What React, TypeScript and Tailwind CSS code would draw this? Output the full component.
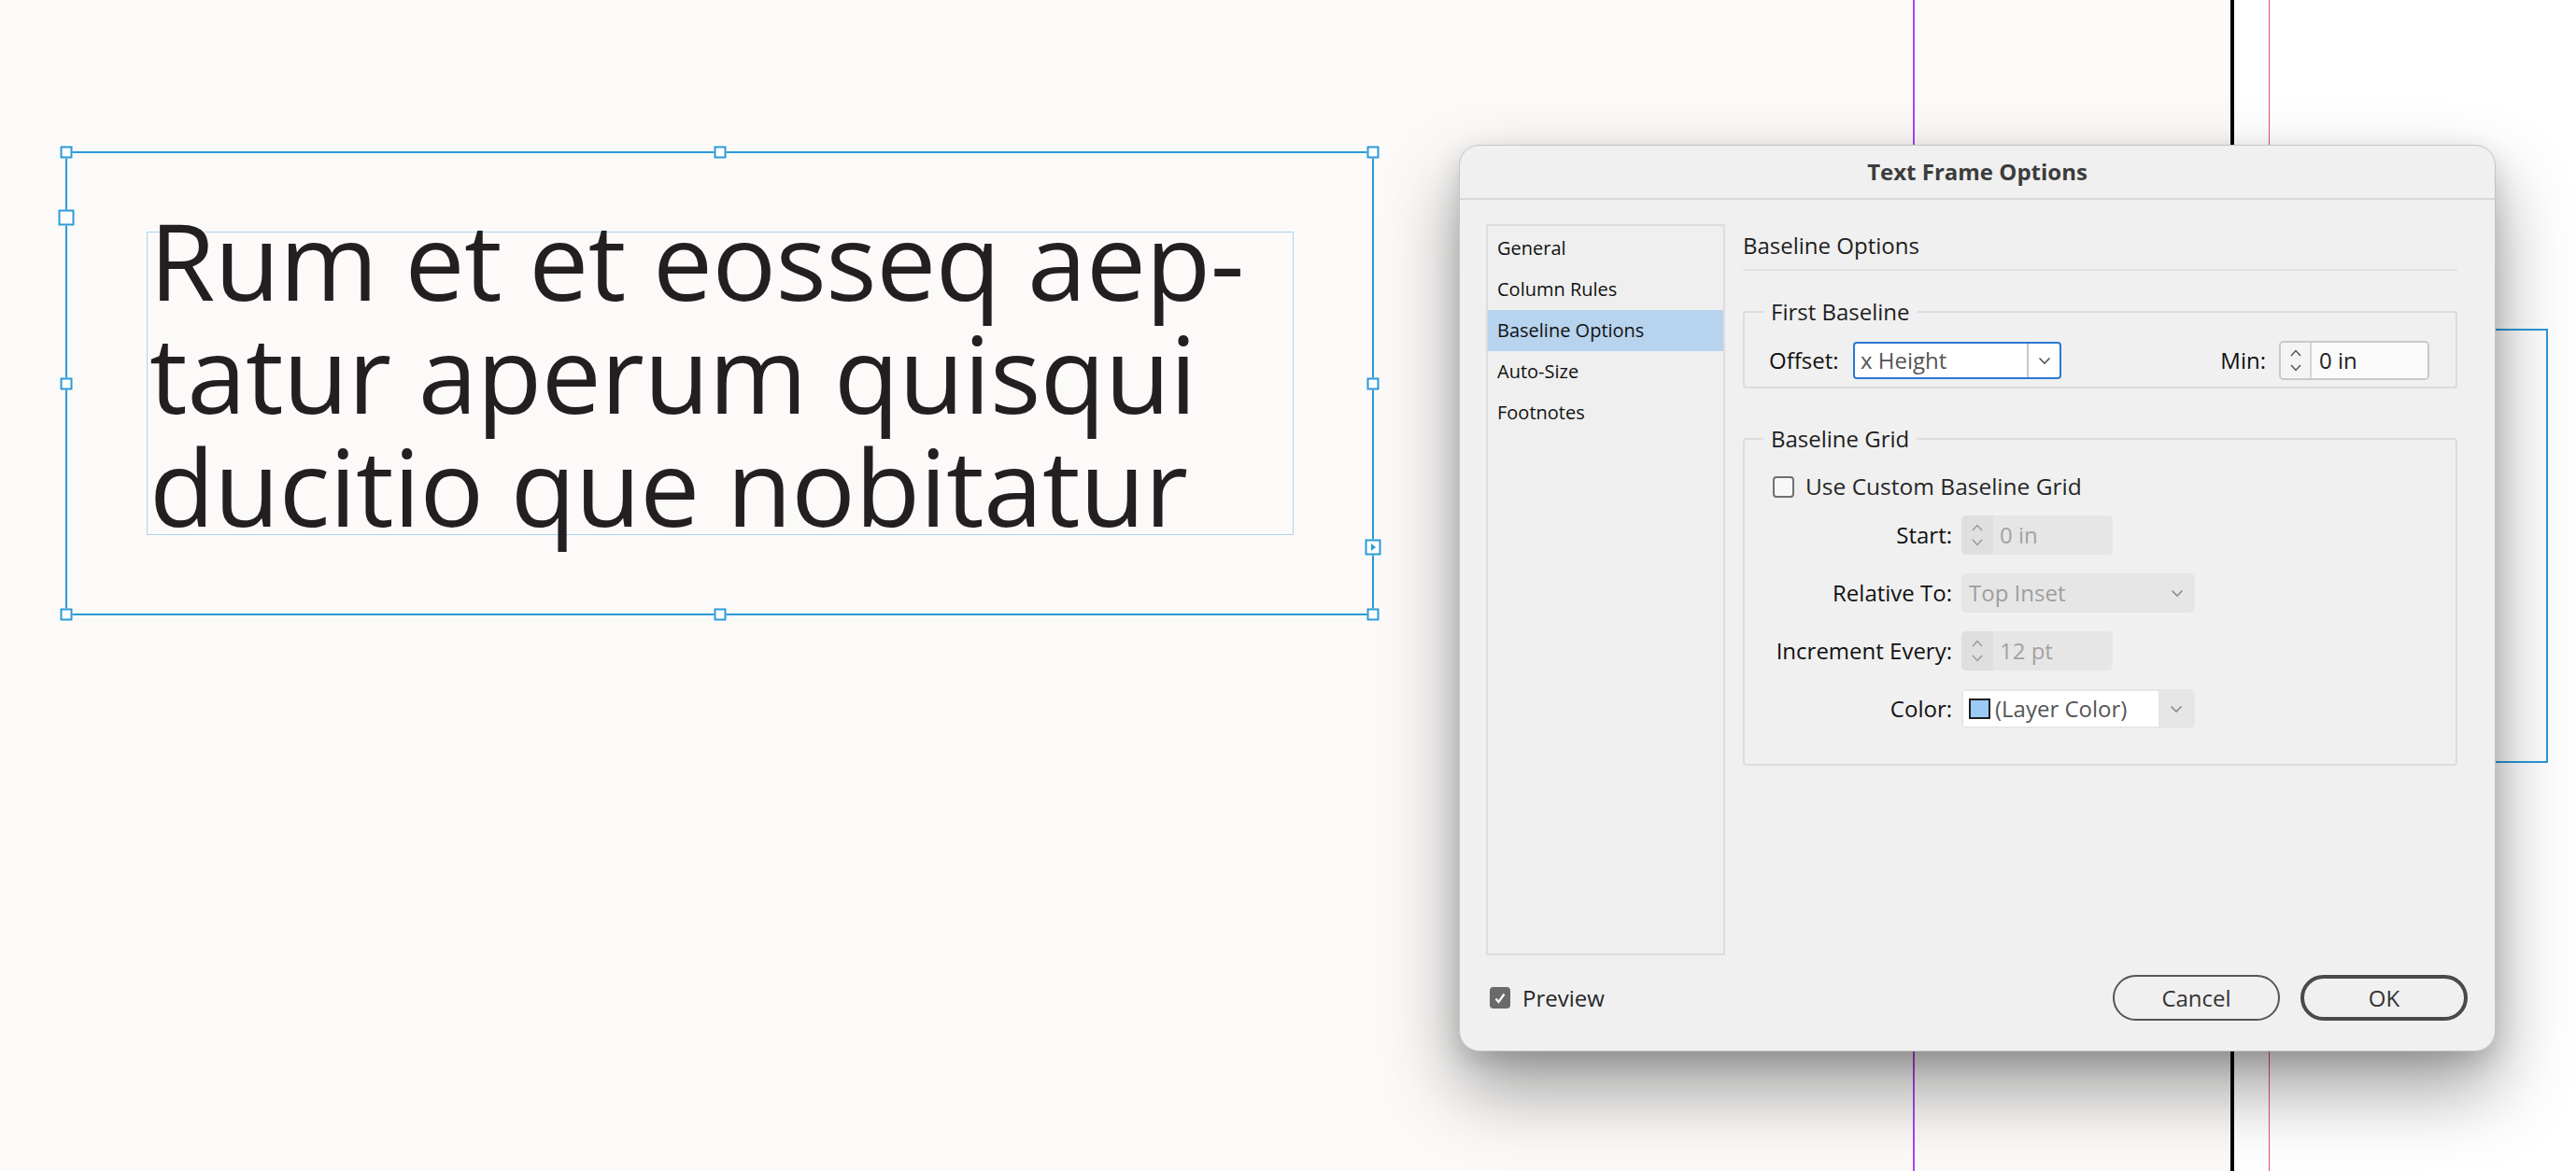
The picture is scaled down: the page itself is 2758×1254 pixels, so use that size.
import React from "react";

const listItems = ["General", "Column Rules", "Baseline Options", "Auto-Size", "Footnotes"];

function Chevron({ muted = false }: { muted?: boolean }) {
  return (
    <svg width="14" height="9" viewBox="0 0 14 9" fill="none">
      <path d="M1.5 1.5 L7 7 L12.5 1.5" stroke={muted ? "#8c8c8c" : "#555"} strokeWidth="1.6" />
    </svg>
  );
}

function SpinArrows({ muted = false }: { muted?: boolean }) {
  const c = muted ? "#9a9a9a" : "#555";
  return (
    <svg width="14" height="30" viewBox="0 0 14 30" fill="none">
      <path d="M2 10 L7 4.5 L12 10" stroke={c} strokeWidth="1.5" />
      <path d="M2 20 L7 25.5 L12 20" stroke={c} strokeWidth="1.5" />
    </svg>
  );
}

function Handle({ className, big = false, port = false }: { className: string; big?: boolean; port?: boolean }) {
  return (
    <div
      className={`absolute -translate-x-1/2 -translate-y-1/2 flex items-center justify-center border-2 border-[#2b9ad8] bg-white ${
        big ? "h-[17px] w-[17px]" : "h-[13px] w-[13px]"
      } ${className}`}
    >
      {port && (
        <svg width="6" height="9" viewBox="0 0 6 9">
          <path d="M0.5 0.5 L5.5 4.5 L0.5 8.5 Z" fill="#2b9ad8" />
        </svg>
      )}
    </div>
  );
}

function SpinField({ value, disabled = false }: { value: string; disabled?: boolean }) {
  if (disabled) {
    return (
      <div className="flex h-[42px] w-[162px] overflow-hidden rounded-[5px] bg-[#e6e6e6]">
        <div className="flex w-[34px] items-center justify-center bg-[#dfdfdf]">
          <SpinArrows muted />
        </div>
        <div className="flex items-center pl-[7px] text-[24px] text-[#a3a3a3]">{value}</div>
      </div>
    );
  }
  return (
    <div className="flex h-[42px] w-[161px] overflow-hidden rounded-[5px] border-2 border-[#c9c9c9]">
      <div className="flex w-[33px] items-center justify-center border-r-2 border-[#d4d4d4] bg-[#f4f4f4]">
        <SpinArrows />
      </div>
      <div className="flex flex-1 items-center bg-[#fafafa] pl-[8px] text-[24px] text-[#222]">{value}</div>
    </div>
  );
}

export default function App() {
  return (
    <div className="relative h-[1254px] w-[2758px] overflow-hidden bg-[#fbfaf9] font-['Open_Sans','Noto_Sans',sans-serif]">
      {/* page area right of the page edge */}
      <div className="absolute bottom-0 left-[2391px] right-0 top-0 bg-white" />

      {/* guides */}
      <div className="absolute bottom-0 left-[2048px] top-0 w-[2px] bg-[#a846ee]" />
      <div className="absolute bottom-0 left-[2388px] top-0 w-[4px] bg-black" />
      <div className="absolute bottom-0 left-[2429px] top-0 w-[1px] bg-[#e2506a]" />

      {/* frame peeking out to the right of the dialog */}
      <div className="absolute left-[2560px] top-[352px] h-[465px] w-[168px] border-2 border-[#2b9ad8]" />

      {/* text frame on the canvas */}
      <div className="absolute left-[157px] top-[248px] h-[325px] w-[1228px] border border-[#a9d4ec]">
        <p className="-mt-[32px] pl-[2px] text-[114px] leading-[121px] tracking-[-0.5px] text-[#231f20]">
          Rum et et eosseq aep-
          <br />
          tatur aperum quisqui
          <br />
          ducitio que nobitatur
        </p>
      </div>
      <div className="absolute left-[70px] top-[162px] h-[497px] w-[1401px] border-2 border-[#2b9ad8]">
        <Handle className="left-[-1px] top-[-1px]" />
        <Handle className="left-1/2 top-[-1px]" />
        <Handle className="left-[calc(100%+1px)] top-[-1px]" />
        <Handle className="left-[-1px] top-1/2" />
        <Handle className="left-[calc(100%+1px)] top-1/2" />
        <Handle className="left-[-1px] top-[calc(100%+1px)]" />
        <Handle className="left-1/2 top-[calc(100%+1px)]" />
        <Handle className="left-[calc(100%+1px)] top-[calc(100%+1px)]" />
        <Handle className="left-[-1px] top-[69px]" big />
        <Handle className="left-[calc(100%+1px)] top-[422px]" big port />
      </div>

      {/* dialog */}
      <div className="absolute left-[1562px] top-[155px] flex h-[971px] w-[1110px] flex-col rounded-[22px] border border-[#c4c4c4] bg-[#f0f0f0] shadow-[0_40px_80px_rgba(0,0,0,0.38),0_10px_28px_rgba(0,0,0,0.14)]">
        <div className="flex h-[58px] items-center justify-center border-b-2 border-[#d7d7d7] text-[24px] font-bold text-[#3c3c3c]">
          Text Frame Options
        </div>

        <div className="flex pl-[28px] pt-[26px]">
          <div className="h-[783px] w-[256px] border-2 border-[#dddddd] bg-[#efefef] pt-[2px]">
            {listItems.map((item) => (
              <div
                key={item}
                className={`flex h-[44px] items-center pl-[10px] text-[20px] text-[#111] ${
                  item === "Baseline Options" ? "bg-[#b7d3ed]" : ""
                }`}
              >
                {item}
              </div>
            ))}
          </div>

          <div className="ml-[19px] w-[765px]">
            <div className="flex h-[50px] items-center border-b-2 border-[#e3e3e3] pb-[2px] text-[24px] text-[#1e1e1e]">
              Baseline Options
            </div>

            <fieldset className="mt-[29px] rounded-[4px] border-2 border-[#dcdcdc] pb-[7px] pt-[16px]">
              <legend className="ml-[20px] px-[8px] text-[24px] leading-[30px] text-[#1e1e1e]">First Baseline</legend>
              <div className="flex h-[42px] items-center pl-[26px] pr-[28px]">
                <span className="w-[90px] text-[24px] text-[#111]">Offset:</span>
                <div className="flex h-[40px] w-[223px] overflow-hidden rounded-[4px] border-2 border-[#2a77d3] bg-white">
                  <div className="flex flex-1 items-center pl-[6px] text-[24px] text-[#555]">x Height</div>
                  <div className="flex w-[35px] items-center justify-center border-l-2 border-[#c8c8c8]">
                    <Chevron />
                  </div>
                </div>
                <div className="flex-1" />
                <span className="mr-[14px] text-[24px] text-[#111]">Min:</span>
                <SpinField value="0 in" />
              </div>
            </fieldset>

            <fieldset className="mt-[39px] rounded-[4px] border-2 border-[#dcdcdc] pb-[38px] pt-[21px]">
              <legend className="ml-[20px] px-[8px] text-[24px] leading-[30px] text-[#1e1e1e]">Baseline Grid</legend>
              <div className="flex h-[30px] items-center pl-[30px]">
                <div className="h-[23px] w-[23px] rounded-[4px] border-2 border-[#707070] bg-[#f7f7f7]" />
                <span className="ml-[12px] text-[24.5px] text-[#262626]">Use Custom Baseline Grid</span>
              </div>

              <div className="mt-[16px] grid grid-cols-[222px_1fr] items-center gap-x-[10px] gap-y-[20px]">
                <span className="text-right text-[24px] text-[#111]">Start:</span>
                <SpinField value="0 in" disabled />

                <span className="text-right text-[24px] text-[#111]">Relative To:</span>
                <div className="flex h-[42px] w-[250px] items-center justify-between rounded-[5px] bg-[#e6e6e6] pl-[8px] pr-[12px]">
                  <span className="text-[24px] text-[#9e9e9e]">Top Inset</span>
                  <Chevron muted />
                </div>

                <span className="text-right text-[24px] text-[#111]">Increment Every:</span>
                <SpinField value="12 pt" disabled />

                <span className="text-right text-[24px] text-[#111]">Color:</span>
                <div className="flex h-[42px] w-[250px] items-center rounded-[5px] bg-[#e6e6e6] p-[2px]">
                  <div className="flex h-full w-[209px] items-center bg-white pl-[6px]">
                    <div className="h-[22px] w-[23px] border-2 border-[#1f1f1f] bg-[#9ccaf6]" />
                    <span className="ml-[5px] text-[24px] text-[#555]">(Layer Color)</span>
                  </div>
                  <div className="flex flex-1 items-center justify-center">
                    <Chevron muted />
                  </div>
                </div>
              </div>
            </fieldset>
          </div>
        </div>

        <div className="mt-[21px] flex h-[49px] items-center justify-between pl-[32px] pr-[29px]">
          <div className="flex items-center">
            <div className="flex h-[23px] w-[22px] items-center justify-center rounded-[4px] bg-[#6a6a6a]">
              <svg width="14" height="14" viewBox="0 0 14 14" fill="none">
                <path d="M2.5 7.5 L5.5 11 L11.5 2.5" stroke="white" strokeWidth="2.2" />
              </svg>
            </div>
            <span className="ml-[13px] text-[24px] text-[#262626]">Preview</span>
          </div>
          <div className="flex gap-[22px]">
            <button className="flex h-[49px] w-[179px] items-center justify-center rounded-full border-2 border-[#555] text-[24px] text-[#333]">
              Cancel
            </button>
            <button className="flex h-[49px] w-[179px] items-center justify-center rounded-full border-4 border-[#4a4a4a] text-[24px] text-[#333]">
              OK
            </button>
          </div>
        </div>
      </div>
    </div>
  );
}
